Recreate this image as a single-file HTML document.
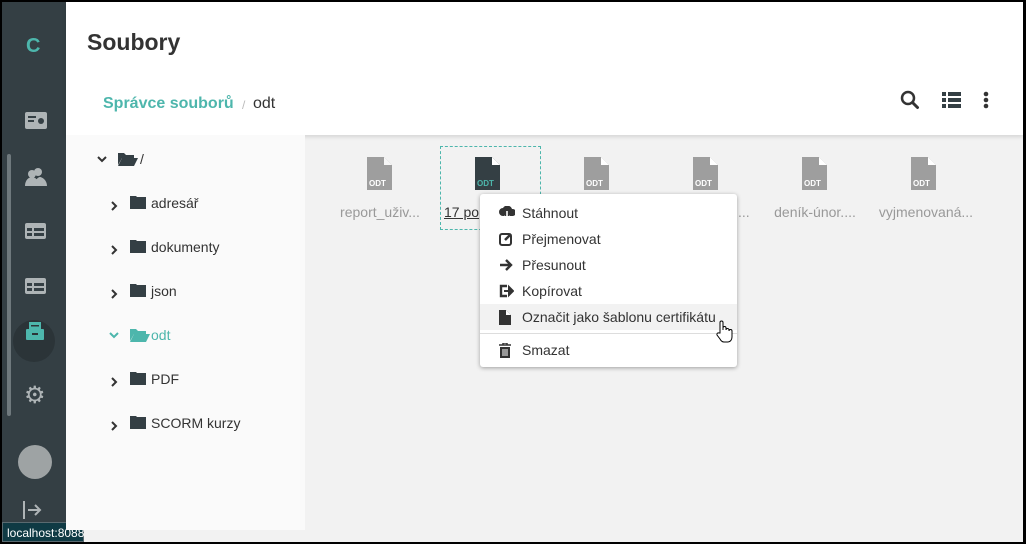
<!DOCTYPE html>
<html><head><meta charset="utf-8"><style>
*{margin:0;padding:0;box-sizing:border-box}
body{width:1026px;height:544px;overflow:hidden;font-family:"Liberation Sans",Arial,sans-serif;background:#000;position:relative}
.frame{position:absolute;left:2px;top:2px;width:1021px;height:540px;background:#f2f2f2;overflow:hidden}
.side{position:absolute;left:0;top:0;width:64px;height:540px;background:#343f44}
.hdr{position:absolute;left:64px;top:0;width:957px;height:133px;background:#fff;box-shadow:0 2px 4px rgba(0,0,0,.12)}
.tree{position:absolute;left:64px;top:133px;width:239px;height:395px;background:#fafafa}
.abs{position:absolute}
.ti{position:absolute;font-size:14px;color:#333;display:flex;align-items:center}
.file{position:absolute;top:155px;width:100px;text-align:center;font-size:14px;color:#999}
.menu{position:absolute;left:478px;top:192px;width:257px;height:173px;background:#fff;border-radius:3px;box-shadow:0 1px 4px rgba(0,0,0,.35)}
.mi{position:absolute;left:0;width:257px;height:26px;font-size:14px;color:#333;display:flex;align-items:center;padding-left:42px}
.mi svg{position:absolute;left:19px}
</style></head><body>
<div class="frame">
<div class="side">
 <div class="abs" style="left:24px;top:33px;color:#4db6ac;font-weight:bold;font-size:20px">C</div>
 <div class="abs" style="left:5px;top:152px;width:4px;height:262px;background:#6f797d;border-radius:2px"></div>
 <svg class="abs" style="left:23px;top:110px" width="22" height="18"><rect x="0" y="0" width="22" height="17" rx="2" fill="#aeb4b6"/><rect x="3" y="4" width="8" height="2" fill="#343f44"/><rect x="3" y="8" width="6" height="2" fill="#343f44"/><circle cx="16" cy="9" r="3" fill="#343f44"/></svg>
 <svg class="abs" style="left:23px;top:165px" width="22" height="19"><circle cx="13" cy="5" r="4" fill="#aeb4b6"/><circle cx="7" cy="7" r="4" fill="#aeb4b6"/><path d="M0 19c0-6 4-9 7-9s7 3 7 9z M9 19c1-6 4-9 6-9s7 3 7 9z" fill="#aeb4b6"/></svg>
 <svg class="abs" style="left:23px;top:221px" width="21" height="16"><rect width="21" height="16" rx="2" fill="#aeb4b6"/><path d="M2 5h5v3H2zM9 5h10v3H9zM2 10h5v3H2zM9 10h10v3H9z" fill="#343f44"/></svg>
 <svg class="abs" style="left:23px;top:276px" width="21" height="16"><rect width="21" height="16" rx="2" fill="#aeb4b6"/><path d="M2 5h5v3H2zM9 5h10v3H9zM2 10h5v3H2zM9 10h10v3H9z" fill="#343f44"/></svg>
 <div class="abs" style="left:11px;top:318px;width:42px;height:42px;border-radius:50%;background:#2b3438"></div>
 <svg class="abs" style="left:24px;top:319px" width="18" height="20"><rect x="3" y="1" width="12" height="8" fill="#4db6ac"/><rect x="0" y="8" width="18" height="11" rx="1" fill="#4db6ac"/><rect x="6" y="12" width="6" height="2" fill="#2b3438"/><rect x="5" y="4" width="8" height="1.5" fill="#2b3438"/></svg>
 <div class="abs" style="left:22px;top:382px;color:#aeb4b6;font-size:24px;line-height:24px">⚙</div>
 <div class="abs" style="left:16px;top:443px;width:34px;height:34px;border-radius:50%;background:#9ea3a4"></div>
 <svg class="abs" style="left:20px;top:498px" width="20" height="20"><path d="M2 1v18" stroke="#aeb4b6" stroke-width="2"/><path d="M6 10h12M13 5l5 5-5 5" stroke="#aeb4b6" stroke-width="2" fill="none"/></svg>
</div>
<div class="abs" style="left:0;top:520px;width:82px;height:20px;background:#0f3a44;color:#fff;font-size:12px;line-height:20px;padding-left:4px;border:1px solid #5a6a70">localhost:8088</div>
<div class="hdr">
 <div class="abs" style="left:21px;top:27px;font-size:23px;font-weight:bold;color:#333">Soubory</div>
 <div class="abs" style="left:37px;top:93px;font-size:16px;font-weight:bold;color:#4db6ac">Správce souborů</div>
 <div class="abs" style="left:176px;top:96px;font-size:12px;color:#bbb">/</div>
 <div class="abs" style="left:187px;top:93px;font-size:16px;color:#333">odt</div>
 <svg class="abs" style="left:834px;top:88px" width="20" height="20"><circle cx="8" cy="8" r="6" stroke="#333" stroke-width="2.5" fill="none"/><path d="M12.5 12.5l5 5" stroke="#333" stroke-width="3" stroke-linecap="round"/></svg>
 <svg class="abs" style="left:876px;top:90px" width="19" height="16"><path d="M0 0h4v4H0zM6 0h13v4H6zM0 6h4v4H0zM6 6h13v4H6zM0 12h4v4H0zM6 12h13v4H6z" fill="#343f44"/></svg>
 <svg class="abs" style="left:916px;top:89px" width="8" height="18"><circle cx="4" cy="3" r="2.3" fill="#333"/><circle cx="4" cy="9" r="2.3" fill="#333"/><circle cx="4" cy="15" r="2.3" fill="#333"/></svg>
</div>
<div class="tree"></div>
<svg class="abs" style="left:95px;top:154px" width="10" height="8"><path d="M1 1l4 4 4-4" stroke="#333" stroke-width="2" fill="none"/></svg>
<svg class="abs" style="left:116px;top:150px" width="20" height="14"><path d="M0 1h6l2 2h8v3H4L0 13z" fill="#343f44"/><path d="M4 6h16l-4 8H0z" fill="#343f44"/></svg>
<div class="ti" style="left:138px;top:149px">/</div>
<svg class="abs" style="left:108px;top:199px" width="8" height="10"><path d="M2 1l4 4-4 4" stroke="#333" stroke-width="2" fill="none"/></svg>
<svg class="abs" style="left:128px;top:193px" width="16" height="14"><path d="M0 1h6l1 1h9v12H0z" fill="#343f44"/></svg>
<div class="ti" style="left:149px;top:193px">adresář</div>
<svg class="abs" style="left:108px;top:243px" width="8" height="10"><path d="M2 1l4 4-4 4" stroke="#333" stroke-width="2" fill="none"/></svg>
<svg class="abs" style="left:128px;top:237px" width="16" height="14"><path d="M0 1h6l1 1h9v12H0z" fill="#343f44"/></svg>
<div class="ti" style="left:149px;top:237px">dokumenty</div>
<svg class="abs" style="left:108px;top:287px" width="8" height="10"><path d="M2 1l4 4-4 4" stroke="#333" stroke-width="2" fill="none"/></svg>
<svg class="abs" style="left:128px;top:281px" width="16" height="14"><path d="M0 1h6l1 1h9v12H0z" fill="#343f44"/></svg>
<div class="ti" style="left:149px;top:281px">json</div>
<svg class="abs" style="left:107px;top:330px" width="10" height="8"><path d="M1 1l4 4 4-4" stroke="#4db6ac" stroke-width="2" fill="none"/></svg>
<svg class="abs" style="left:128px;top:326px" width="20" height="14"><path d="M0 1h6l2 2h8v3H4L0 13z" fill="#4db6ac"/><path d="M4 6h16l-4 8H0z" fill="#4db6ac"/></svg>
<div class="ti" style="left:149px;top:325px;color:#4db6ac">odt</div>
<svg class="abs" style="left:108px;top:375px" width="8" height="10"><path d="M2 1l4 4-4 4" stroke="#333" stroke-width="2" fill="none"/></svg>
<svg class="abs" style="left:128px;top:369px" width="16" height="14"><path d="M0 1h6l1 1h9v12H0z" fill="#343f44"/></svg>
<div class="ti" style="left:149px;top:369px">PDF</div>
<svg class="abs" style="left:108px;top:419px" width="8" height="10"><path d="M2 1l4 4-4 4" stroke="#333" stroke-width="2" fill="none"/></svg>
<svg class="abs" style="left:128px;top:413px" width="16" height="14"><path d="M0 1h6l1 1h9v12H0z" fill="#343f44"/></svg>
<div class="ti" style="left:149px;top:413px">SCORM kurzy</div>

<div class="abs" style="left:438px;top:144px;width:101px;height:84px;border:1px dashed #4db6ac"></div>
<svg class="abs" style="left:365px;top:155px" width="26" height="33"><path d="M0 0h17l8 8v25H0z" fill="#9e9e9e"/><path d="M17 0v8h8" fill="#fff" opacity=".9"/><text x="2" y="29" font-size="8" font-weight="bold" fill="#fff" font-family="Liberation Sans">ODT</text></svg>
<div class="file" style="left:328px;top:202px">report_uživ...</div>
<svg class="abs" style="left:473px;top:155px" width="26" height="33"><path d="M0 0h17l8 8v25H0z" fill="#343f44"/><path d="M17 0v8h8" fill="#fff"/><text x="2" y="29" font-size="8" font-weight="bold" fill="#4db6ac" font-family="Liberation Sans">ODT</text></svg>
<div class="abs" style="left:442px;top:202px;font-size:14px;color:#333;text-decoration:underline">17 po</div>
<svg class="abs" style="left:582px;top:155px" width="26" height="33"><path d="M0 0h17l8 8v25H0z" fill="#9e9e9e"/><path d="M17 0v8h8" fill="#fff"/><text x="2" y="29" font-size="8" font-weight="bold" fill="#fff" font-family="Liberation Sans">ODT</text></svg>
<svg class="abs" style="left:691px;top:155px" width="26" height="33"><path d="M0 0h17l8 8v25H0z" fill="#9e9e9e"/><path d="M17 0v8h8" fill="#fff"/><text x="2" y="29" font-size="8" font-weight="bold" fill="#fff" font-family="Liberation Sans">ODT</text></svg>
<div class="abs" style="left:736px;top:202px;font-size:14px;color:#999">...</div>
<svg class="abs" style="left:800px;top:155px" width="26" height="33"><path d="M0 0h17l8 8v25H0z" fill="#9e9e9e"/><path d="M17 0v8h8" fill="#fff"/><text x="2" y="29" font-size="8" font-weight="bold" fill="#fff" font-family="Liberation Sans">ODT</text></svg>
<div class="file" style="left:763px;top:202px">deník-únor....</div>
<svg class="abs" style="left:909px;top:155px" width="26" height="33"><path d="M0 0h17l8 8v25H0z" fill="#9e9e9e"/><path d="M17 0v8h8" fill="#fff"/><text x="2" y="29" font-size="8" font-weight="bold" fill="#fff" font-family="Liberation Sans">ODT</text></svg>
<div class="file" style="left:874px;top:202px">vyjmenovaná...</div>

<div class="menu">
 <div class="mi" style="top:6px"><svg width="16" height="14"><path d="M4 10a4 4 0 010-8 5 5 0 019 1 3.5 3.5 0 011 7z" fill="#333"/><path d="M8 5v8M5 10l3 3 3-3" stroke="#fff" stroke-width="1.6" fill="none"/></svg>Stáhnout</div>
 <div class="mi" style="top:32px"><svg width="14" height="14"><rect x="1" y="2" width="11" height="11" rx="2" stroke="#333" stroke-width="2" fill="none"/><path d="M6 8l6-6" stroke="#333" stroke-width="2.5"/></svg>Přejmenovat</div>
 <div class="mi" style="top:58px"><svg width="14" height="14"><path d="M1 7h11M7 2l5 5-5 5" stroke="#333" stroke-width="2.4" fill="none"/></svg>Přesunout</div>
 <div class="mi" style="top:84px"><svg width="15" height="14"><path d="M8 2H2v10h6" stroke="#333" stroke-width="2.4" fill="none"/><path d="M5 7h6M10 3l4 4-4 4z" stroke="#333" stroke-width="2" fill="#333"/></svg>Kopírovat</div>
 <div class="mi" style="top:110px;background:#f2f2f2"><svg width="12" height="15"><path d="M0 0h7l5 5v10H0z" fill="#333"/><path d="M7 0v5h5" fill="#fff"/></svg>Označit jako šablonu certifikátu</div>
 <div class="abs" style="left:0;top:139px;width:257px;height:1px;background:#ddd"></div>
 <div class="mi" style="top:143px"><svg width="12" height="15"><path d="M0 2h12M4 2V0h4v2" stroke="#333" stroke-width="1.5" fill="none"/><rect x="1" y="4" width="10" height="11" fill="#333"/><path d="M4 6v7M6 6v7M8 6v7" stroke="#fff"/></svg>Smazat</div>
</div>
<svg class="abs" style="left:713px;top:318px" width="18" height="24"><path d="M5 13V2.5a1.5 1.5 0 013 0V10V8a1.5 1.5 0 013 0v2a1.5 1.5 0 013 0v1a1.5 1.5 0 013 0v6c0 3-2 5-4 5H9c-2 0-3-1-4-3l-3-4a1.5 1.5 0 012-2z" fill="#fff" stroke="#000" stroke-width="1"/></svg>
</div>
</body></html>
